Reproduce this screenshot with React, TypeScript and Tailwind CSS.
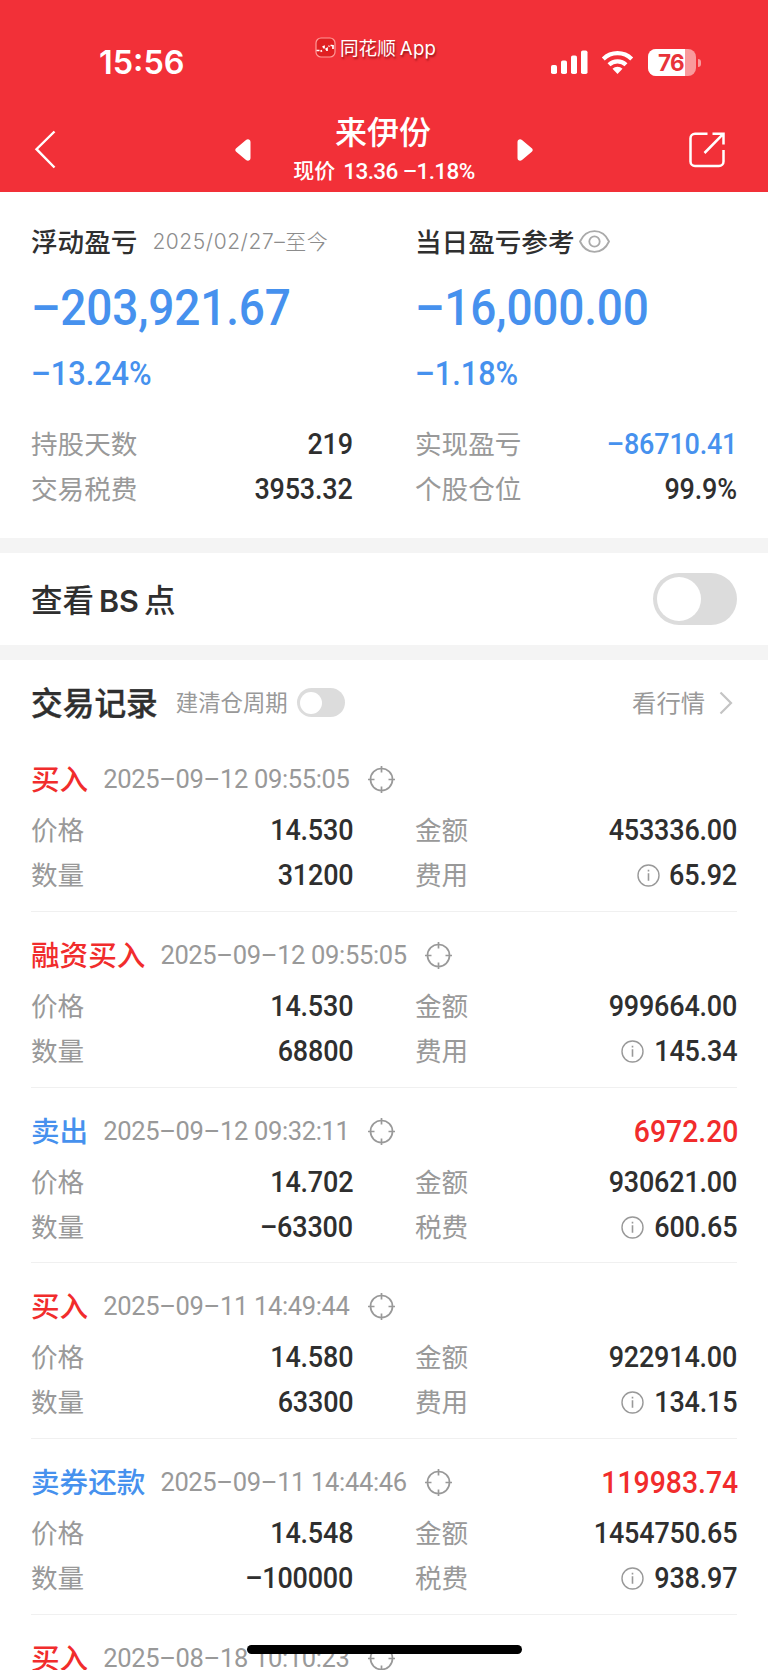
import clsx from 'clsx';

type Trade = {
  type: string;
  side: 'buy' | 'sell';
  time: string;
  profit?: string;
  price?: string;
  amount?: string;
  count?: string;
  feeLabel?: string;
  fee?: string;
};

const trades: Trade[] = [
  { type: '买入', side: 'buy', time: '2025–09–12 09:55:05', price: '14.530', amount: '453336.00', count: '31200', feeLabel: '费用', fee: '65.92' },
  { type: '融资买入', side: 'buy', time: '2025–09–12 09:55:05', price: '14.530', amount: '999664.00', count: '68800', feeLabel: '费用', fee: '145.34' },
  { type: '卖出', side: 'sell', time: '2025–09–12 09:32:11', profit: '6972.20', price: '14.702', amount: '930621.00', count: '–63300', feeLabel: '税费', fee: '600.65' },
  { type: '买入', side: 'buy', time: '2025–09–11 14:49:44', price: '14.580', amount: '922914.00', count: '63300', feeLabel: '费用', fee: '134.15' },
  { type: '卖券还款', side: 'sell', time: '2025–09–11 14:44:46', profit: '119983.74', price: '14.548', amount: '1454750.65', count: '–100000', feeLabel: '税费', fee: '938.97' },
  { type: '买入', side: 'buy', time: '2025–08–18 10:10:23' },
];

const Target = () => (
  <svg className="w-[27px] h-[27px] shrink-0" viewBox="0 0 27 27" fill="none" stroke="#999" strokeWidth="1.7">
    <circle cx="13.5" cy="13.5" r="11" />
    <path d="M13.5 0v6.5M13.5 20.5V27M0 13.5h6.5M20.5 13.5H27" />
  </svg>
);

const Info = () => (
  <svg className="w-[23px] h-[23px] shrink-0" viewBox="0 0 23 23" fill="none" stroke="#999" strokeWidth="1.4">
    <circle cx="11.5" cy="11.5" r="10.5" />
    <path d="M11.5 9.2v7.6M11.5 5.8v1.7" strokeWidth="1.6" />
  </svg>
);

const Num = ({ children, className }: { children: string; className?: string }) => (
  <span
    className={clsx(
      'inline-block origin-right scale-x-[0.93] -mr-px font-[Roboto] font-medium leading-[45px]',
      className ?? 'text-[29px] tracking-[-0.2px]'
    )}
  >
    {children}
  </span>
);

const Label = ({ children }: { children: string }) => (
  <span className="text-[26.6px] leading-[45px] text-[#999] relative -top-[2px]">{children}</span>
);

const Cell = ({ label, value, info, valueClass }: { label: string; value: string; info?: boolean; valueClass?: string }) => (
  <div className="flex items-center justify-between h-[45px]">
    <Label>{label}</Label>
    <div className="flex items-center gap-1">
      {info && <Info />}
      <Num className={valueClass}>{value}</Num>
    </div>
  </div>
);

const TradeRow = ({ trade }: { trade: Trade }) => (
  <div className={clsx('pt-[21px]', trade.price && 'h-[175.75px] border-b border-[#f0f0f0]')}>
    <div className="flex items-center h-[45px]">
      <span
        className={clsx(
          'font-medium text-[28.6px] leading-[45px] relative -top-[2px]',
          trade.side === 'buy' ? 'text-[#f12c2c]' : 'text-[#4691ee]'
        )}
      >
        {trade.type}
      </span>
      <span className="ml-[15px] font-[Roboto] text-[25.5px] tracking-[-0.34px] leading-[45px] text-[#999] whitespace-nowrap">
        {trade.time}
      </span>
      <span className="ml-[18px]">
        <Target />
      </span>
      {trade.profit && <Num className="ml-auto text-[30.5px] text-[#f12c2c]">{trade.profit}</Num>}
    </div>
    {trade.price && (
      <div className="grid grid-cols-[321px_321px] gap-x-[63px] mt-[6px]">
        <Cell label="价格" value={trade.price} />
        <Cell label="金额" value={trade.amount!} />
        <Cell label="数量" value={trade.count!} />
        <Cell label={trade.feeLabel!} value={trade.fee!} info />
      </div>
    )}
  </div>
);

const StatusBar = () => (
  <div className="relative h-[104px]">
    <span className="absolute left-[99px] top-[44px] font-[Inter] font-semibold text-[32.4px] leading-[38px]">15:56</span>
    <div className="absolute left-[315px] top-[36px] flex items-center h-6 gap-1">
      <svg className="w-[21px] h-[21px] -mt-px" viewBox="0 0 21 21" fill="none">
        <rect x="1" y="1" width="19" height="19" rx="5" fill="#e01f22" stroke="#ff9a98" strokeWidth="1.2" />
        <path d="M1.5 13.5h3M5.5 14.5l1.5-1M7.5 10l1.5-.5v2M10.5 12.5l1.5-1v2.5M13.5 9.5l1-.5M15.5 8.5h2M18 8v4" stroke="#fff" strokeWidth="1.7" />
      </svg>
      <span className="relative -top-px text-[18.6px] leading-6 whitespace-nowrap [text-shadow:1px_2px_2px_rgba(80,0,0,0.55)]">
        同花顺<span className="font-[Inter] ml-1 tracking-[0.3px]">App</span>
      </span>
    </div>
    <svg className="absolute left-[550px] top-[49px] w-[38px] h-[26px]" viewBox="0 0 38 26" fill="#fff">
      <rect x="1" y="16" width="6" height="9" rx="1.8" />
      <rect x="11" y="11.5" width="6" height="13.5" rx="1.8" />
      <rect x="21" y="6.5" width="6" height="18.5" rx="1.8" />
      <rect x="31" y="1.5" width="6.5" height="23.5" rx="1.8" />
    </svg>
    <svg className="absolute left-[601px] top-[50px] w-[33px] h-[25px]" viewBox="0 0 33 25" fill="none" stroke="#fff" strokeWidth="4.2">
      <path d="M2.3 8.9a20.4 20.4 0 0 1 28.4 0" />
      <path d="M8 14.8a12.2 12.2 0 0 1 17 0" />
      <path d="M16.5 24l-5-5.2a7.2 7.2 0 0 1 10 0z" fill="#fff" stroke="none" />
    </svg>
    <div className="absolute left-[648px] top-[49px] flex items-center">
      <div className="relative w-[48px] h-[27px] rounded-[8px] overflow-hidden bg-[#f99a9c]">
        <div className="h-full w-[37px] bg-white" />
        <span className="absolute left-[10px] top-0 font-[Inter] font-bold text-[22.5px] leading-[27px] tracking-[-0.8px] text-[#e8333a]">76</span>
      </div>
      <div className="ml-[2px] w-[3px] h-[8px] rounded-r-full bg-[#f99a9c]" />
    </div>
  </div>
);

const NavBar = () => (
  <div className="flex h-[88px] items-start">
    <svg className="ml-[34px] mt-[26px] w-[22px] h-[39px]" viewBox="0 0 22 39" fill="none" stroke="#fff" strokeWidth="2.4">
      <path d="M20.5 1.5L2.5 19.2L20.5 37.5" />
    </svg>
    <svg className="ml-[179px] mt-[35px] w-4 h-[22px]" viewBox="0 0 16 22" fill="#fff">
      <path d="M1.2 9.2L11 .9C13 -.5 15.5.5 15.5 3v16c0 2.5-2.5 3.5-4.5 2.1L1.2 12.8c-1.2-1-1.2-2.6 0-3.6z" />
    </svg>
    <div className="w-[266px] flex flex-col items-center">
      <div className="font-medium text-[32px] leading-[40px] mt-[6px] relative -left-px">来伊份</div>
      <div className="flex items-center text-[21px] leading-[30px] mt-[5px] whitespace-nowrap">
        <span className="font-medium relative -top-px">现价</span>
        <span className="relative top-px font-[Roboto] font-medium text-[22.5px] tracking-[-0.6px] ml-2">13.36 –1.18%</span>
      </div>
    </div>
    <svg className="mt-[35px] w-4 h-[22px]" viewBox="0 0 16 22" fill="#fff">
      <path d="M14.8 9.2L5 .9C3 -.5.5.5.5 3v16c0 2.5 2.5 3.5 4.5 2.1L14.8 12.8c1.2-1 1.2-2.6 0-3.6z" />
    </svg>
    <svg className="ml-auto mr-[43px] mt-[28px] w-[36px] h-[36px]" viewBox="0 0 36 36" fill="none" stroke="#fff" strokeWidth="2.5">
      <path d="M18.5 1.7H6A4.5 4.5 0 0 0 1.5 6.2v23.3A4.5 4.5 0 0 0 6 34h24a4.5 4.5 0 0 0 4.500-4.500V18" />
      <path d="M23.500 1.700H34.500V12.500M34.500 1.700L15.500 21" />
    </svg>
  </div>
);

const BigNum = ({ amount, rate }: { amount: string; rate: string }) => (
  <div className="font-[Roboto] font-medium text-[#4691ee] -ml-px">
    <div className="origin-left scale-x-[0.92] text-[50px] leading-[60px] mt-[14px] tracking-[-0.200px]">{amount}</div>
    <div className="origin-left scale-x-[0.945] text-[32.500px] leading-[40px] mt-[16px]">{rate}</div>
  </div>
);

const Summary = () => (
  <section className="h-[346px] px-8 pt-[27px] grid grid-cols-[320px_320px] gap-x-16 content-start text-[#2f2f2f]">
    <div>
      <div className="flex items-center h-[45px] -ml-px">
        <span className="font-medium text-[26.600px] leading-[45px] relative -top-px">浮动盈亏</span>
        <span className="ml-[15px] font-light text-[21px] tracking-[0.550px] leading-[45px] text-[#8c8c8c] font-[Inter,'Noto_Sans_CJK_SC']">
          2025/02/27–至今
        </span>
      </div>
      <BigNum amount="–203,921.67" rate="–13.24%" />
    </div>
    <div>
      <div className="flex items-center h-[45px] -ml-px">
        <span className="font-medium text-[26.600px] leading-[45px] relative -top-px">当日盈亏参考</span>
        <svg className="ml-[4px] w-[31px] h-[23px]" viewBox="0 0 31 23" fill="none" stroke="#aaa" strokeWidth="1.800">
          <path d="M1 11.500C4 5 9.500 1.200 15.500 1.200S27 5 30 11.500C27 18 21.500 21.800 15.500 21.800S4 18 1 11.500z" />
          <circle cx="15.500" cy="11.500" r="5.200" />
        </svg>
      </div>
      <BigNum amount="–16,000.00" rate="–1.18%" />
    </div>
    <div className="mt-[28px] -ml-px">
      <Cell label="持股天数" value="219" />
      <Cell label="交易税费" value="3953.32" />
    </div>
    <div className="mt-[28px] -ml-px">
      <Cell label="实现盈亏" value="–86710.41" valueClass="text-[29px] tracking-[-0.200px] text-[#4691ee]" />
      <Cell label="个股仓位" value="99.9%" />
    </div>
  </section>
);

export default function App() {
  return (
    <div className="relative w-[768px] h-[1670px] overflow-hidden bg-white font-['Noto_Sans_CJK_SC',sans-serif] text-[#2f2f2f]">
      <header className="h-[192px] bg-[#f23038] text-white">
        <StatusBar />
        <NavBar />
      </header>

      <Summary />

      <div className="h-[15px] bg-[#f4f4f4]" />

      {/* BS toggle */}
      <section className="h-[92px] pl-[31px] pr-[31px] flex items-center justify-between">
        <span className="font-medium text-[31.500px] leading-[45px]">
          查看<span className="font-[Inter] font-semibold text-[30.500px] mx-[5px]">BS</span>点
        </span>
        <div className="w-[84px] h-[52px] rounded-full bg-[#dcdcdc] p-1">
          <div className="w-[44px] h-[44px] rounded-full bg-white" />
        </div>
      </section>

      <div className="h-[15px] bg-[#f4f4f4]" />

      {/* Trade list */}
      <section className="pl-[31px] pr-[31px]">
        <div className="flex items-center h-[76px] pt-[9px]">
          <span className="font-medium text-[31.700px] leading-[45px] relative -top-px [-webkit-text-stroke:0.4px_#2f2f2f]">交易记录</span>
          <span className="ml-[18px] text-[22.400px] leading-[45px] text-[#999] relative -top-px">建清仓周期</span>
          <div className="ml-[9px] w-[48px] h-[29px] rounded-full bg-[#dcdcdc] p-[3.500px]">
            <div className="w-[22px] h-[22px] rounded-full bg-white" />
          </div>
          <span className="ml-auto text-[24.300px] leading-[45px] text-[#999] relative -top-px">看行情</span>
          <svg className="ml-[14px] mr-[4px] w-[14px] h-[24px]" viewBox="0 0 14 24" fill="none" stroke="#c4c4c4" strokeWidth="2.200">
            <path d="M1.500 1.500L12 12L1.500 22.500" />
          </svg>
        </div>
        {trades.map((t) => (
          <TradeRow key={t.time + t.type} trade={t} />
        ))}
      </section>

      {/* Home indicator */}
      <div className="absolute left-[247px] top-[1645px] w-[275px] h-[9px] rounded-full bg-black" />
    </div>
  );
}
